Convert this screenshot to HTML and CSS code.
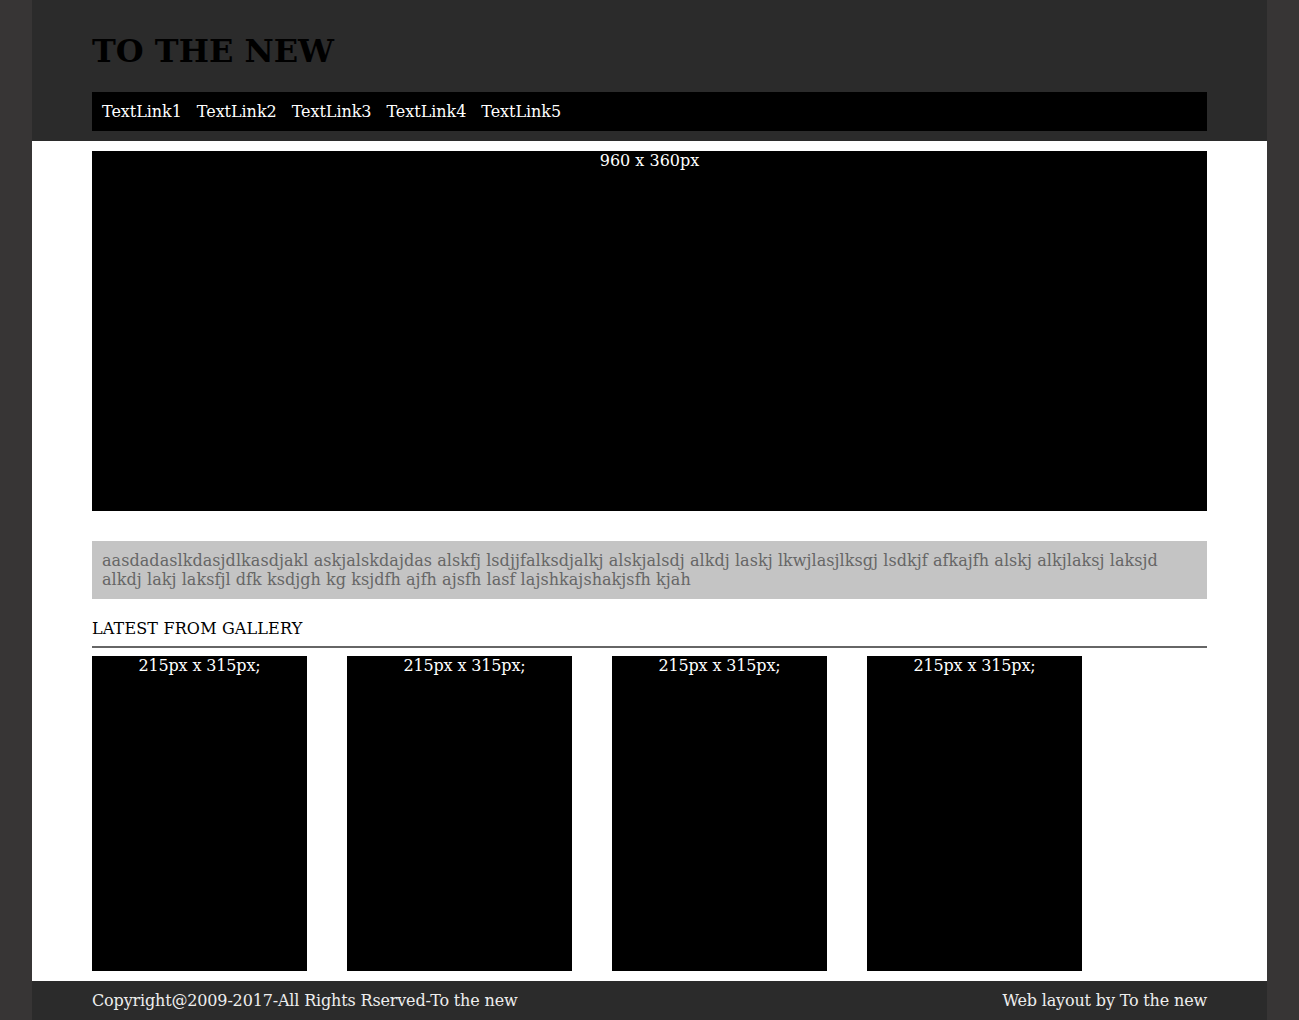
FILE: index.html
```html
<!DOCTYPE html>
<html>
<head>
<meta charset="utf-8">
<title>To The New</title>
<link rel="stylesheet" href="styles.css">
</head>
<body>
<div class="wrapper">
  <header class="header">
    <h1 class="logo">TO THE NEW</h1>
    <nav class="nav">
      <a class="nav-link" href="#">TextLink1</a>
      <a class="nav-link" href="#">TextLink2</a>
      <a class="nav-link" href="#">TextLink3</a>
      <a class="nav-link" href="#">TextLink4</a>
      <a class="nav-link" href="#">TextLink5</a>
    </nav>
  </header>
  <main class="main">
    <div class="banner">960 x 360px</div>
    <p class="intro">aasdadaslkdasjdlkasdjakl askjalskdajdas alskfj lsdjjfalksdjalkj alskjalsdj alkdj laskj lkwjlasjlksgj lsdkjf afkajfh alskj alkjlaksj laksjd alkdj lakj laksfjl dfk ksdjgh kg ksjdfh ajfh ajsfh lasf lajshkajshakjsfh kjah</p>
    <h2 class="section-title">LATEST FROM GALLERY</h2>
    <div class="gallery">
      <div class="gallery-item">215px x 315px;</div>
      <div class="gallery-item gallery-item-pad">215px x 315px;</div>
      <div class="gallery-item">215px x 315px;</div>
      <div class="gallery-item">215px x 315px;</div>
    </div>
  </main>
  <footer class="footer">
    <span class="footer-left">Copyright@2009-2017-All Rights Rserved-To the new</span>
    <span class="footer-right">Web layout by To the new</span>
  </footer>
</div>
</body>
</html>
```

FILE: styles.css
```css
html, body {
  margin: 0;
  padding: 0;
}
body {
  background: #373535;
  font-family: "DejaVu Serif", serif;
  font-size: 16px;
  line-height: 19px;
}
.wrapper {
  width: 1235px;
  margin: 0 auto;
}
.header {
  background: #2b2b2b;
  padding: 33px 60px 10px;
}
.logo {
  margin: 0 0 22px;
  font-size: 32px;
  line-height: 37px;
  font-weight: bold;
  color: #000;
}
.nav {
  background: #000;
  padding: 10px;
  display: flex;
  gap: 15px;
}
.nav-link {
  color: #fff;
  text-decoration: none;
  letter-spacing: -0.05px;
}
.main {
  background: #fff;
  padding: 10px 60px;
}
.banner {
  height: 360px;
  background: #000;
  color: #fff;
  text-align: center;
}
.intro {
  margin: 30px 0 20px;
  padding: 10px;
  background: #c4c4c4;
  color: #666;
  letter-spacing: 0.055px;
}
.section-title {
  margin: 0 0 8px;
  padding-bottom: 8px;
  border-bottom: 2px solid #666;
  font-size: 16px;
  font-weight: normal;
  line-height: 19px;
  color: #000;
  letter-spacing: 0.15px;
}
.gallery {
  display: flex;
  gap: 40px;
}
.gallery-item {
  width: 215px;
  height: 315px;
  background: #000;
  color: #fff;
  text-align: center;
  letter-spacing: -0.14px;
}
.gallery-item-pad {
  padding-left: 10px;
}
.footer {
  background: #2b2b2b;
  padding: 10px 60px;
  display: flex;
  justify-content: space-between;
  color: #eee;
  letter-spacing: -0.16px;
}
```
